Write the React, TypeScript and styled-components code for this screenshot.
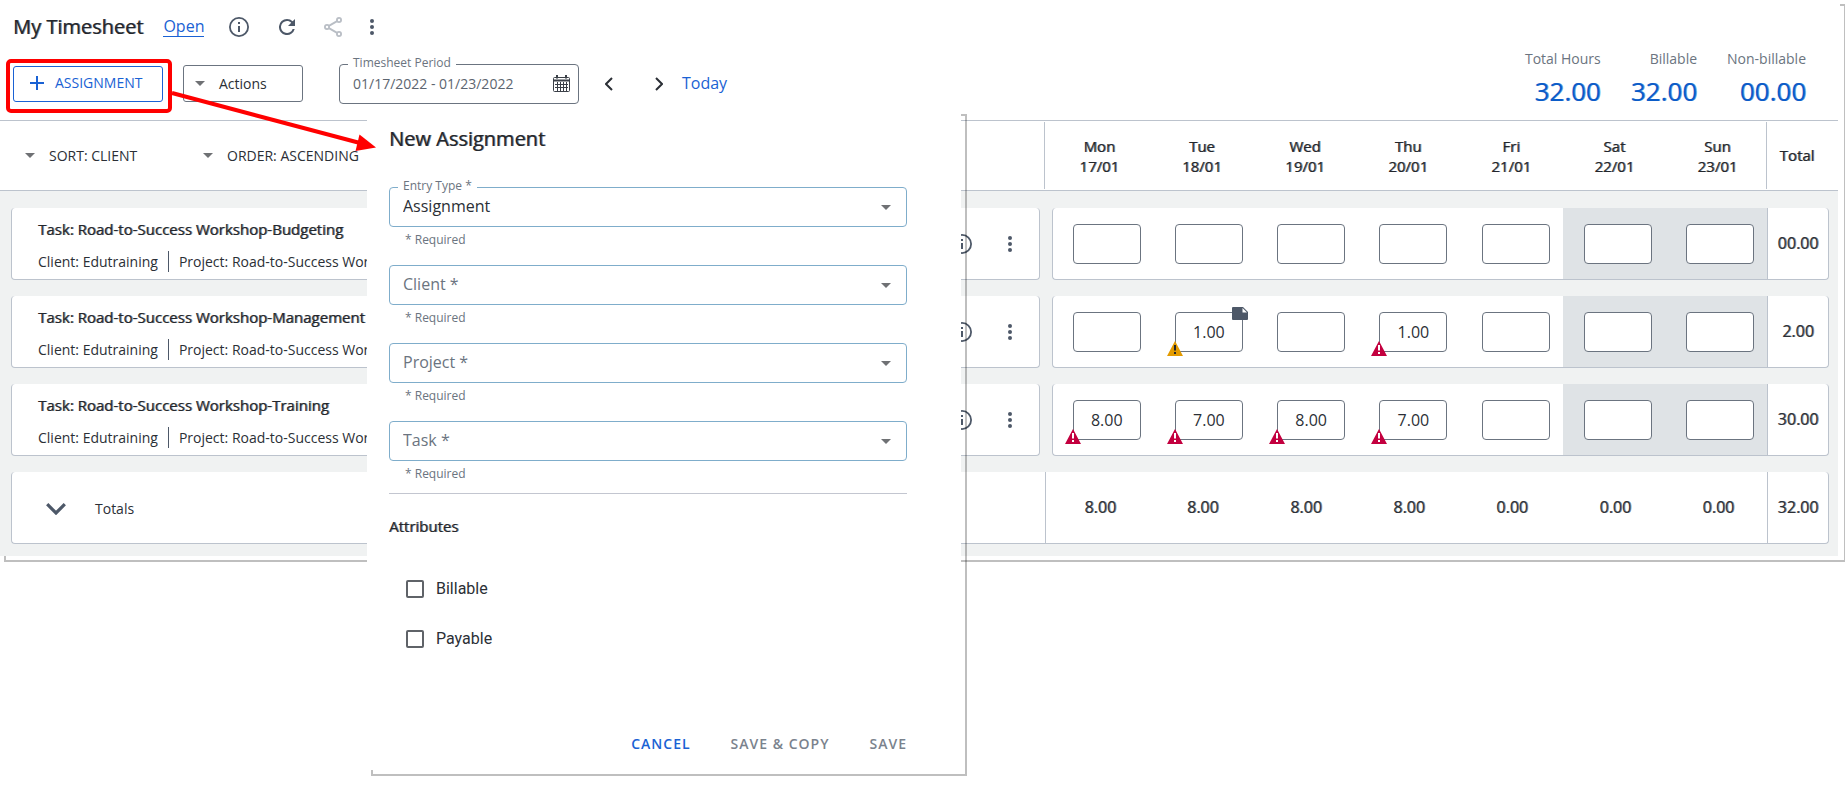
import React from "react";
import styled, { createGlobalStyle, css } from "styled-components";

const ink = "#2b2f36";
const slate = "#4d5868";
const blue = "#1a62d4";
const line = "#bcc3cd";
const muted = "#6b7480";

/* Thickens the regular weight while keeping its widths. */
const strong = css`
  font-weight: 400;
  text-shadow: 1px 0 color-mix(in srgb, currentColor 60%, transparent);
`;

const GlobalStyle = createGlobalStyle`
  *, *::before, *::after { box-sizing: border-box; }
  body { margin: 0; background: #fff; color: ${ink}; font: 14px/20px "Open Sans", sans-serif; }
  button, input, select { font: inherit; color: inherit; }
  button { background: none; border: 0; padding: 0; cursor: pointer; }
  h1, h2, h3, p, dl, dd { margin: 0; }
`;

const Page = styled.div`
  position: relative;
  min-height: 100vh;
  overflow: hidden;
  padding-right: 5px;
`;

const Panel = styled.div`
  &::before {
    content: "";
    position: absolute;
    z-index: -1;
    inset: 4px -6px -6px 4px;
    border: 2px solid rgba(0, 0, 0, 0.25);
  }
  &::after {
    content: "";
    position: absolute;
    z-index: -1;
    inset: 0;
    background: #fff;
  }
`;

const Sheet = styled(Panel)`
  position: relative;
  z-index: 0;
  padding-right: 2px;
`;

const TopBar = styled.header`
  display: flex;
  justify-content: space-between;
`;

const TitleRow = styled.div`
  display: flex;
  align-items: center;
  height: 53px;
  padding-left: 13px;
`;

const Title = styled.h1`
  font-size: 20px;
  line-height: 28px;
  color: #22262c;
  ${strong}
`;

const StatusLink = styled.a`
  margin: 0 25px 0 20px;
  border-bottom: 1px solid ${blue};
  color: ${blue};
  font-size: 16px;
  line-height: 20px;
  text-decoration: none;
`;

const IconButton = styled.button<{ $w?: number; $gap?: number; $faint?: boolean }>`
  display: flex;
  justify-content: center;
  align-items: center;
  width: ${(p) => p.$w ?? 20}px;
  height: 20px;
  margin-right: ${(p) => p.$gap ?? 0}px;
  color: ${(p) => (p.$faint ? "#b9bec5" : slate)};
`;

const ActionRow = styled.div`
  display: flex;
  align-items: center;
  height: 61px;
  margin-bottom: 6px;
  padding-left: 13px;
`;

const Highlighted = styled.div`
  position: relative;
  &::after {
    content: "";
    position: absolute;
    inset: -7px -9px -11px -7px;
    border: 4px solid #ff0000;
    border-radius: 5px;
    pointer-events: none;
  }
`;

const AddButton = styled.button`
  display: flex;
  align-items: center;
  gap: 11px;
  width: 150px;
  height: 36px;
  padding: 0 0 2px 16px;
  border: 1px solid ${blue};
  border-radius: 3px;
  color: ${blue};
`;

const ActionsButton = styled.button`
  display: flex;
  align-items: center;
  gap: 14px;
  width: 120px;
  height: 37px;
  margin: 0 36px 0 20px;
  padding-left: 11px;
  border: 1px solid ${muted};
  border-radius: 3px;
`;

const PeriodField = styled.div`
  position: relative;
  width: 240px;
  height: 40px;
  margin-right: 26px;
`;

const FloatingLabel = styled.label`
  position: absolute;
  top: -9px;
  left: 9px;
  padding: 0 5px;
  background: #fff;
  color: ${muted};
  font-size: 12px;
  line-height: 16px;
`;

const PeriodInput = styled.input`
  width: 100%;
  height: 100%;
  padding: 0 36px 0 13px;
  border: 1px solid ${muted};
  border-radius: 4px;
  background: none;
  color: #5c6570;
`;

const FieldIcon = styled.div`
  position: absolute;
  top: 10px;
  right: 9px;
`;

const TodayButton = styled.button`
  padding-bottom: 2px;
  color: ${blue};
  font-size: 16px;
`;

const Stats = styled.dl`
  display: flex;
  align-items: flex-start;
  gap: 30px;
  padding: 49px 32px 0 0;
  text-align: right;
`;

const StatLabel = styled.dt`
  color: ${muted};
`;

const StatValue = styled.dd`
  padding-top: 4px;
  color: #0b5cc8;
  font-size: 26px;
  line-height: 36px;
  ${strong}
`;

const Table = styled.table`
  display: block;
`;

const Head = styled.thead`
  display: block;
  border: solid ${line};
  border-width: 1px 0;
`;

const HeadRow = styled.tr`
  display: grid;
  grid-template-columns: 1043fr repeat(7, 103fr) 72px;
  height: 69px;
`;

const SortCell = styled.th`
  display: flex;
  align-items: center;
  padding-left: 25px;
  font-weight: 400;
`;

const SortButton = styled.button`
  display: flex;
  align-items: center;
  gap: 14px;
  width: 178px;
  white-space: nowrap;
`;

const DayHead = styled.th<{ $divided?: boolean }>`
  display: flex;
  flex-direction: column;
  justify-content: center;
  align-items: center;
  margin: 1px 0;
  padding-left: 7px;
  border-left: ${(p) => (p.$divided ? `1px solid ${line}` : "0")};
  color: #22262c;
  font-size: 15px;
  ${strong}
`;

const TotalHead = styled(DayHead)`
  padding: 0 11px 2px 0;
`;

const Body = styled.tbody`
  display: flex;
  flex-direction: column;
  gap: 16px;
  padding: 17px 9px 12px 11px;
  background: #f0f2f2;
`;

const Row = styled.tr`
  display: grid;
  grid-template-columns: 1018fr repeat(7, 100fr) 62px;
  height: 72px;
`;

const Cell = styled.td`
  padding: 0;
  border-bottom: 1px solid ${line};
  background: #fff;
`;

const TaskCell = styled(Cell)`
  display: flex;
  align-items: center;
  margin-right: 12px;
  padding: 0 19px 0 26px;
  border-left: 1px solid ${line};
  border-right: 1px solid ${line};
  border-radius: 4px;
`;

const TaskText = styled.div`
  flex: 1;
  padding-top: 3px;
`;

const TaskName = styled.div`
  color: #22262c;
  font-size: 15px;
  line-height: 20px;
  ${strong}
`;

const TaskMeta = styled.div`
  display: flex;
  align-items: center;
  margin-top: 12px;
  line-height: 21px;
  span + span {
    margin-left: 10px;
    padding-left: 10px;
    border-left: 1px solid ${slate};
  }
`;

const DayCell = styled(Cell)<{ $weekend?: boolean; $first?: boolean }>`
  display: flex;
  align-items: center;
  justify-content: flex-end;
  padding-right: 13px;
  border-left: ${(p) => (p.$first ? `1px solid ${line}` : "0")};
  border-radius: ${(p) => (p.$first ? "4px 0 0 4px" : "0")};
  background: ${(p) => (p.$weekend ? "#dfe3e6" : "#fff")};
`;

const HourBox = styled.div`
  position: relative;
  width: 68px;
  height: 40px;
`;

const HourInput = styled.input`
  width: 100%;
  height: 100%;
  padding: 0;
  border: 1px solid ${muted};
  border-radius: 4px;
  background: #fff;
  font-size: 16px;
  text-align: center;
`;

const AlertBadge = styled.svg`
  position: absolute;
  left: -8px;
  top: 29px;
`;

const NoteBadge = styled.svg`
  position: absolute;
  left: 57px;
  top: -5px;
`;

const SumCell = styled(Cell)<{ $divided?: boolean }>`
  display: flex;
  align-items: center;
  justify-content: center;
  padding: 0 0 2px 6px;
  border-left: ${(p) => (p.$divided ? `1px solid ${line}` : "0")};
  font-size: 16px;
  ${strong}
`;

const TotalCell = styled(SumCell)`
  padding: 0 0 2px;
  border-left: 1px solid ${line};
  border-right: 1px solid ${line};
  border-radius: 0 4px 4px 0;
`;

const TotalsRow = styled(Row)`
  grid-template-columns: 1033fr repeat(7, 103fr) 62px;
`;

const TotalsLabel = styled(Cell)`
  display: flex;
  align-items: center;
  gap: 29px;
  padding: 2px 0 0 34px;
  border-left: 1px solid ${line};
  border-radius: 4px 0 0 4px;
`;

const Dialog = styled(Panel)`
  position: absolute;
  z-index: 1;
  top: 110px;
  left: 367px;
  width: 594px;
`;

const Form = styled.form`
  padding: 15px 54px 16px 22px;
`;

const DialogTitle = styled.h2`
  margin-bottom: 34px;
  color: #22262c;
  font-size: 20px;
  line-height: 28px;
  ${strong}
`;

const Field = styled.div`
  position: relative;
  height: 78px;
`;

const Select = styled.select<{ $filled?: boolean }>`
  appearance: none;
  display: block;
  width: 100%;
  height: 40px;
  padding: 0 32px 2px 13px;
  border: 1px solid #7fadcb;
  border-radius: 4px;
  background: #fff;
  color: ${(p) => (p.$filled ? ink : muted)};
  font-size: 16px;
`;

const SelectArrow = styled.span`
  position: absolute;
  top: 18px;
  right: 16px;
  display: flex;
  pointer-events: none;
`;

const Hint = styled.p`
  padding: 5px 0 0 16px;
  color: ${muted};
  font-size: 12px;
  line-height: 16px;
`;

const Attributes = styled.section`
  margin-top: -6px;
  border-top: 1px solid #c3c6d0;
`;

const SectionTitle = styled.h3`
  margin: 22px 0 28px;
  color: #22262c;
  font-size: 15px;
  line-height: 20px;
  ${strong}
`;

const CheckRow = styled.label`
  display: flex;
  align-items: center;
  gap: 12px;
  height: 50px;
  padding-left: 17px;
  font: 16px/20px Roboto, sans-serif;
`;

const Checkbox = styled.input`
  appearance: none;
  width: 18px;
  height: 18px;
  margin: 0;
  border: 2px solid #5f6368;
  border-radius: 2px;
`;

const ButtonRow = styled.div`
  display: flex;
  justify-content: flex-end;
  gap: 40px;
  margin-top: 70px;
`;

const TextButton = styled.button<{ $primary?: boolean }>`
  color: ${(p) => (p.$primary ? blue : "#7a828d")};
  letter-spacing: 1px;
  font-weight: 600;
`;

const Connector = styled.svg`
  position: absolute;
  z-index: 2;
  top: 84px;
  left: 170px;
  pointer-events: none;
`;

const Caret = () => (
  <svg width="10" height="5" viewBox="0 0 10 5" aria-hidden>
    <path d="M0 0h10L5 5z" fill="#6f7174" />
  </svg>
);

const InfoIcon = () => (
  <svg width="20" height="20" viewBox="0 0 20 20" fill="currentColor" aria-hidden>
    <circle cx="10" cy="10" r="9.1" fill="none" stroke="currentColor" strokeWidth="1.8" />
    <path d="M9 5h2v2H9zM9 9h2v6H9z" />
  </svg>
);

const RefreshIcon = () => (
  <svg width="16" height="16" viewBox="0 0 16 16" fill="currentColor" aria-hidden>
    <path d="M13.65 2.35A7.96 7.96 0 0 0 8 0a8 8 0 1 0 7.73 10h-2.08A6 6 0 1 1 8 2c1.66 0 3.14.69 4.22 1.78L9 7h7V0z" />
  </svg>
);

const ShareIcon = () => (
  <svg width="18" height="20" viewBox="0 0 18 20" fill="none" stroke="currentColor" strokeWidth="1.8" aria-hidden>
    <circle cx="15" cy="3" r="2.1" />
    <circle cx="3" cy="10" r="2.1" />
    <circle cx="15" cy="17" r="2.1" />
    <path d="M4.9 8.9l8.2-4.8M4.9 11.1l8.2 4.8" />
  </svg>
);

const DotsIcon = () => (
  <svg width="4" height="16" viewBox="0 0 4 16" fill="currentColor" aria-hidden>
    <circle cx="2" cy="2" r="2" />
    <circle cx="2" cy="8" r="2" />
    <circle cx="2" cy="14" r="2" />
  </svg>
);

const PlusIcon = () => (
  <svg width="14" height="14" viewBox="0 0 14 14" stroke="currentColor" strokeWidth="2" aria-hidden>
    <path d="M7 0v14M0 7h14" />
  </svg>
);

const CalendarIcon = () => (
  <svg width="17" height="17" viewBox="0 0 17 17" fill="none" stroke="#3b4048" aria-hidden>
    <rect x="0.5" y="2.5" width="16" height="14" rx="1" />
    <path d="M1 5.5h15" strokeWidth="2" />
    <path d="M2 9.5h13M2 12.5h13M4.5 7v9M7.5 7v9M10.5 7v9M13.5 7v9" />
    <path d="M4 0v3.5M13 0v3.5" strokeWidth="2" />
  </svg>
);

const Chevron = ({ flip }: { flip?: boolean }) => (
  <svg width="8" height="14" viewBox="0 0 8 14" fill="none" stroke="#2b2f36" strokeWidth="2" aria-hidden>
    <path d={flip ? "M1 1l6 6-6 6" : "M7 1L1 7l6 6"} />
  </svg>
);

const ChevronDown = () => (
  <svg width="20" height="12" viewBox="0 0 20 12" fill="none" stroke={slate} strokeWidth="3.2" aria-hidden>
    <path d="M1.2 1.2L10 10l8.8-8.8" />
  </svg>
);

const Alert = ({ amber }: { amber?: boolean }) => (
  <AlertBadge width="16" height="15" viewBox="0 0 16 15" role="img" aria-label={amber ? "Warning" : "Error"}>
    <path d="M8 0l8 15H0z" fill={amber ? "#e39b00" : "#c3003f"} />
    <path d="M7 4h2v5.500H7zM7 11h2v2H7z" fill={amber ? "#22262c" : "#fff"} />
  </AlertBadge>
);

const Note = () => (
  <NoteBadge width="16" height="13" viewBox="0 0 16 13" role="img" aria-label="Note">
    <path d="M1 0h10l5 5v7a1 1 0 0 1-1 1H1a1 1 0 0 1-1-1V1a1 1 0 0 1 1-1z" fill={slate} />
    <path d="M10.500 1v4.500H15z" fill="#fff" />
  </NoteBadge>
);

const days = [
  ["Mon", "17/01"],
  ["Tue", "18/01"],
  ["Wed", "19/01"],
  ["Thu", "20/01"],
  ["Fri", "21/01"],
  ["Sat", "22/01"],
  ["Sun", "23/01"],
];

type Entry = { hours?: string; alert?: "error" | "warning"; note?: boolean };

const tasks: { name: string; entries: Entry[]; total: string }[] = [
  { name: "Budgeting", entries: [{}, {}, {}, {}, {}, {}, {}], total: "00.00" },
  {
    name: "Management",
    entries: [{}, { hours: "1.00", alert: "warning", note: true }, {}, { hours: "1.00", alert: "error" }, {}, {}, {}],
    total: "2.00",
  },
  {
    name: "Training",
    entries: [
      { hours: "8.00", alert: "error" },
      { hours: "7.00", alert: "error" },
      { hours: "8.00", alert: "error" },
      { hours: "7.00", alert: "error" },
      {},
      {},
      {},
    ],
    total: "30.00",
  },
];

const sums = ["8.00", "8.00", "8.00", "8.00", "0.00", "0.00", "0.00"];

const stats = [
  ["Total Hours", "32.00"],
  ["Billable", "32.00"],
  ["Non-billable", "00.00"],
];

export default function App() {
  return (
    <Page>
      <GlobalStyle />
      <Sheet as="main">
        <TopBar>
          <div>
            <TitleRow>
              <Title>My Timesheet</Title>
              <StatusLink href="#status">Open</StatusLink>
              <IconButton $gap={30} aria-label="Information"><InfoIcon /></IconButton>
              <IconButton $w={16} $gap={29} aria-label="Refresh"><RefreshIcon /></IconButton>
              <IconButton $w={18} $gap={28} $faint aria-label="Share"><ShareIcon /></IconButton>
              <IconButton $w={4} aria-label="More options"><DotsIcon /></IconButton>
            </TitleRow>
            <ActionRow>
              <Highlighted>
                <AddButton><PlusIcon />ASSIGNMENT</AddButton>
              </Highlighted>
              <ActionsButton><Caret />Actions</ActionsButton>
              <PeriodField>
                <PeriodInput id="period" defaultValue="01/17/2022 - 01/23/2022" />
                <FloatingLabel htmlFor="period">Timesheet Period</FloatingLabel>
                <FieldIcon>
                  <IconButton $w={17} aria-label="Choose period"><CalendarIcon /></IconButton>
                </FieldIcon>
              </PeriodField>
              <IconButton $w={8} $gap={42} aria-label="Previous period"><Chevron /></IconButton>
              <IconButton $w={8} $gap={19} aria-label="Next period"><Chevron flip /></IconButton>
              <TodayButton>Today</TodayButton>
            </ActionRow>
          </div>
          <Stats>
            {stats.map(([label, value]) => (
              <div key={label}>
                <StatLabel>{label}</StatLabel>
                <StatValue>{value}</StatValue>
              </div>
            ))}
          </Stats>
        </TopBar>
        <Table>
          <Head>
            <HeadRow>
              <SortCell>
                <SortButton><Caret />SORT: CLIENT</SortButton>
                <SortButton><Caret />ORDER: ASCENDING</SortButton>
              </SortCell>
              {days.map(([day, date], i) => (
                <DayHead key={day} $divided={i === 0}>
                  <span>{day}</span>
                  <span>{date}</span>
                </DayHead>
              ))}
              <TotalHead $divided>Total</TotalHead>
            </HeadRow>
          </Head>
          <Body>
            {tasks.map((task) => (
              <Row key={task.name}>
                <TaskCell>
                  <TaskText>
                    <TaskName>Task: Road-to-Success Workshop-{task.name}</TaskName>
                    <TaskMeta>
                      <span>Client: Edutraining</span>
                      <span>Project: Road-to-Success Workshop</span>
                    </TaskMeta>
                  </TaskText>
                  <IconButton $gap={28} aria-label="Task information"><InfoIcon /></IconButton>
                  <IconButton aria-label="Task options"><DotsIcon /></IconButton>
                </TaskCell>
                {task.entries.map((entry, i) => (
                  <DayCell key={days[i][0]} $first={i === 0} $weekend={i > 4}>
                    <HourBox>
                      <HourInput aria-label={`${task.name} ${days[i][0]} hours`} defaultValue={entry.hours ?? ""} />
                      {entry.alert && <Alert amber={entry.alert === "warning"} />}
                      {entry.note && <Note />}
                    </HourBox>
                  </DayCell>
                ))}
                <TotalCell>{task.total}</TotalCell>
              </Row>
            ))}
            <TotalsRow>
              <TotalsLabel><IconButton aria-label="Expand totals"><ChevronDown /></IconButton>Totals</TotalsLabel>
              {sums.map((sum, i) => (
                <SumCell key={days[i][0]} $divided={i === 0}>{sum}</SumCell>
              ))}
              <TotalCell>32.00</TotalCell>
            </TotalsRow>
          </Body>
        </Table>
      </Sheet>

      <Dialog role="dialog" aria-labelledby="dialog-title">
        <Form>
          <DialogTitle id="dialog-title">New Assignment</DialogTitle>
          <Field>
            <Select id="entry-type" $filled defaultValue="Assignment">
              <option>Assignment</option>
            </Select>
            <FloatingLabel htmlFor="entry-type">Entry Type *</FloatingLabel>
            <SelectArrow><Caret /></SelectArrow>
            <Hint>* Required</Hint>
          </Field>
          {["Client", "Project", "Task"].map((name) => (
            <Field key={name}>
              <Select aria-label={name} defaultValue="">
                <option value="">{name} *</option>
              </Select>
              <SelectArrow><Caret /></SelectArrow>
              <Hint>* Required</Hint>
            </Field>
          ))}
          <Attributes>
            <SectionTitle>Attributes</SectionTitle>
            <CheckRow><Checkbox type="checkbox" />Billable</CheckRow>
            <CheckRow><Checkbox type="checkbox" />Payable</CheckRow>
          </Attributes>
          <ButtonRow>
            <TextButton type="button" $primary>CANCEL</TextButton>
            <TextButton type="button">SAVE &amp; COPY</TextButton>
            <TextButton type="button">SAVE</TextButton>
          </ButtonRow>
        </Form>
      </Dialog>

      <Connector width="210" height="72" viewBox="0 0 210 72" aria-hidden>
        <path d="M2 9L190 59" stroke="#ff0000" strokeWidth="4" />
        <path d="M206 63.500L189.500 50.500 185.500 67z" fill="#ff0000" />
      </Connector>
    </Page>
  );
}
